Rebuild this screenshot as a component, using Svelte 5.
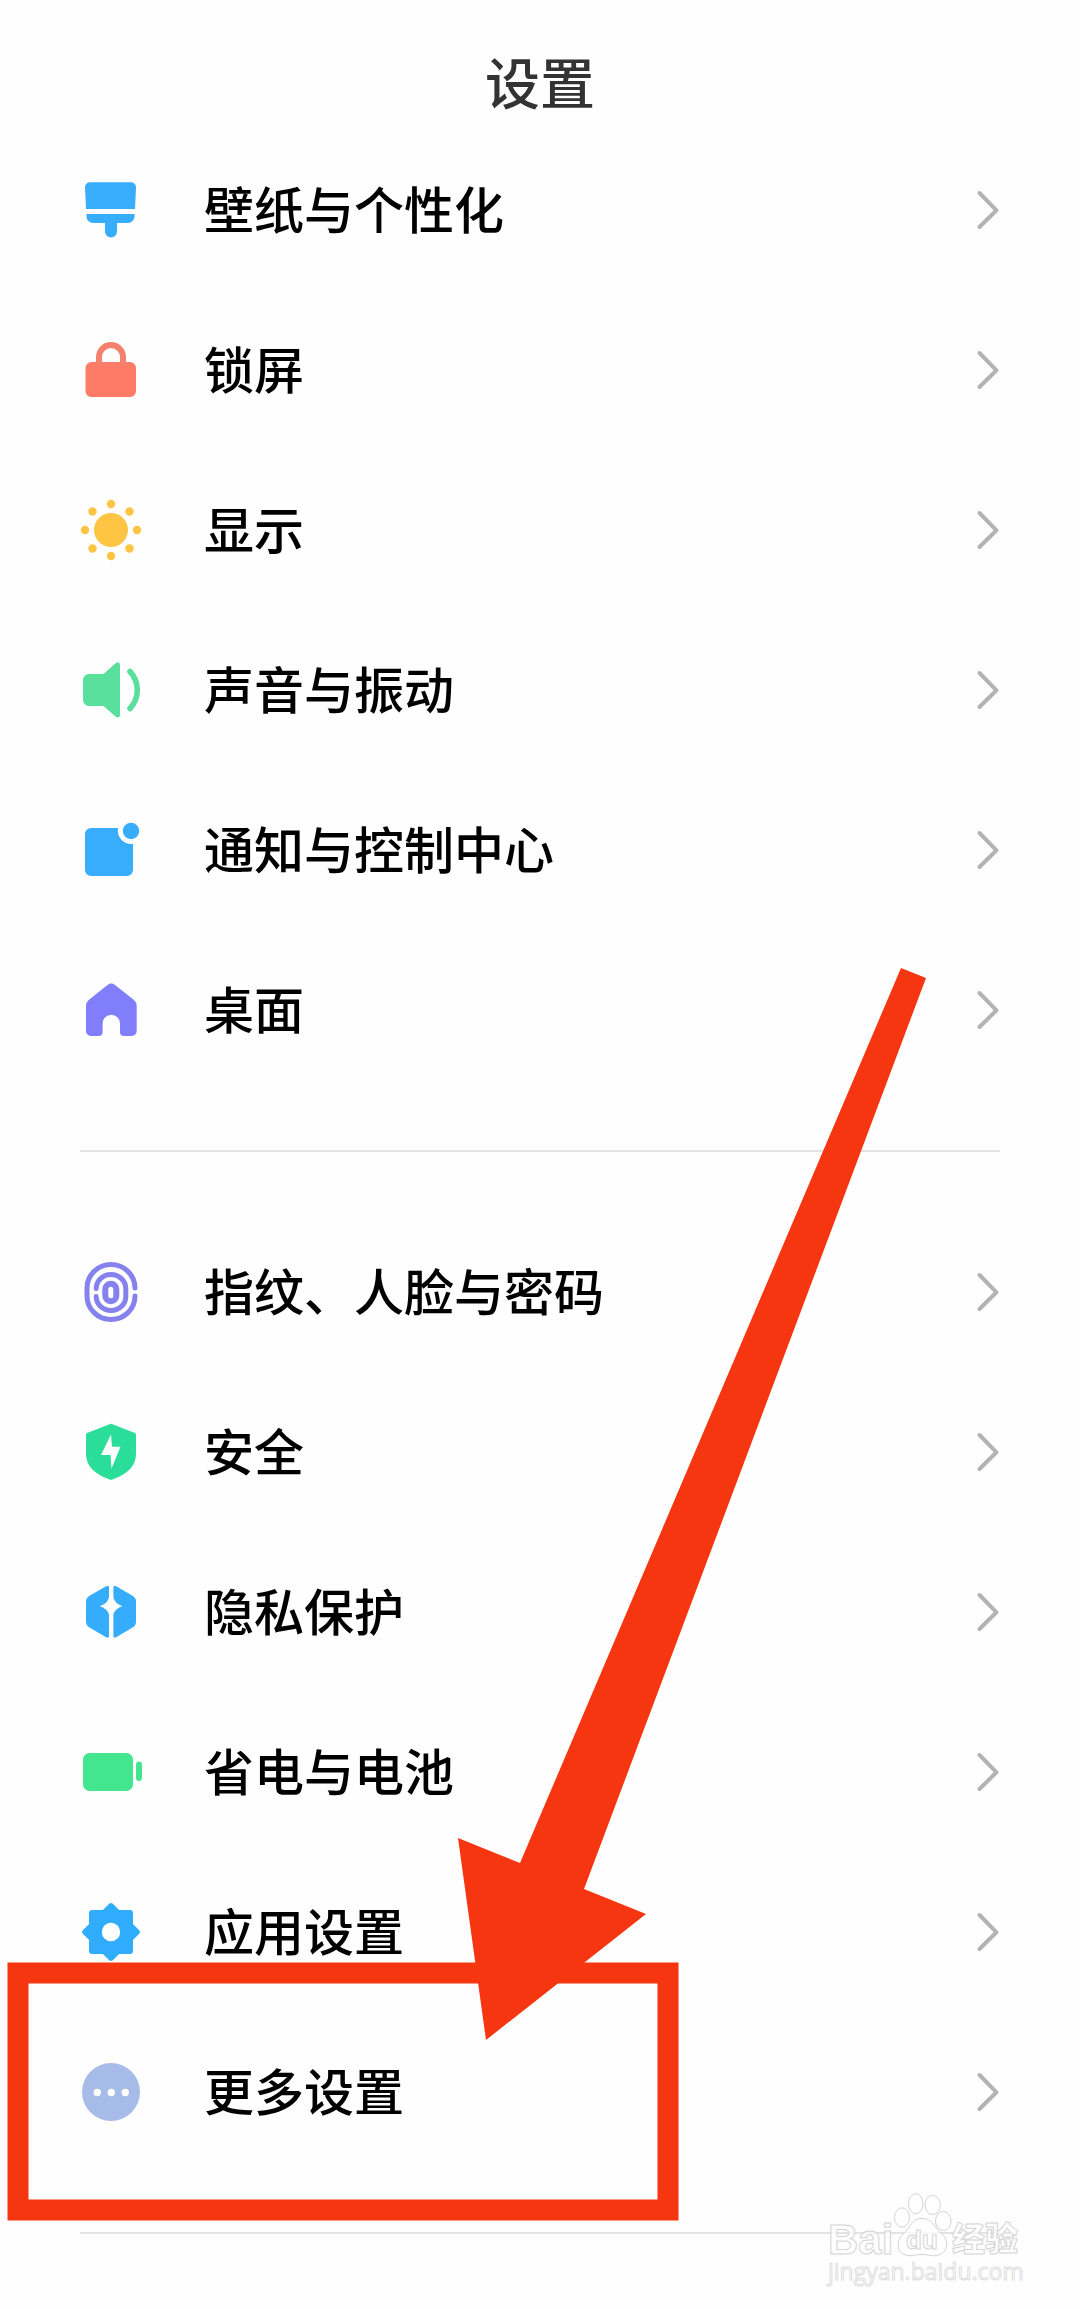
<script>
  const groups = [
    [
      { icon: "brush", label: "壁纸与个性化" },
      { icon: "lock", label: "锁屏" },
      { icon: "sun", label: "显示" },
      { icon: "sound", label: "声音与振动" },
      { icon: "notice", label: "通知与控制中心" },
      { icon: "home", label: "桌面" }
    ],
    [
      { icon: "finger", label: "指纹、人脸与密码" },
      { icon: "shield", label: "安全" },
      { icon: "privacy", label: "隐私保护" },
      { icon: "battery", label: "省电与电池" },
      { icon: "gear", label: "应用设置" },
      { icon: "more", label: "更多设置" }
    ]
  ];

  const rays = [
    [31, 5],
    [49.5, 12.5],
    [57, 31],
    [49.5, 49.5],
    [31, 57],
    [12.5, 49.5],
    [5, 31],
    [12.5, 12.5]
  ];
</script>

<div class="page">
  <header>
    <h1>设置</h1>
  </header>

  <main>
    {#each groups as group}
      <ul class="group">
        {#each group as item}
          <li>
            <button class="row" type="button">
              <svg class="icon" viewBox="0 0 62 62" aria-hidden="true">
                {#if item.icon === "brush"}
                  <g fill="#38adfb">
                    <path d="M10 3.3H51a5 5 0 0 1 5 5L55 30H6L5 8.3a5 5 0 0 1 5-5Z" />
                    <path d="M6.5 35h48v2.5a6.5 6.5 0 0 1-6.5 6.5H37v8.5a6 6 0 0 1-12 0V44H13a6.5 6.5 0 0 1-6.5-6.5Z" />
                  </g>
                {:else if item.icon === "lock"}
                  <rect x="5.5" y="23" width="50.5" height="35" rx="6" fill="#fe7b66" />
                  <path d="M19 25V18a12 12 0 0 1 24 0v7" fill="none" stroke="#f4806e" stroke-width="6" />
                {:else if item.icon === "sun"}
                  <g fill="#fec443">
                    <circle cx="31" cy="31" r="17" />
                    {#each rays as [cx, cy]}
                      <circle {cx} {cy} r="4.2" />
                    {/each}
                  </g>
                {:else if item.icon === "sound"}
                  <path d="M9 15H23.5L35.5 4.2Q40 1.5 40 6V56Q40 60 35.5 57.5L23.5 47H9a6 6 0 0 1-6-6V21a6 6 0 0 1 6-6Z" fill="#5ae09c" />
                  <path d="M50 12.5Q57.3 20.5 57.3 31T50 49.5" fill="none" stroke="#5ae09c" stroke-width="5.6" stroke-linecap="round" />
                {:else if item.icon === "notice"}
                  <g fill="#38adfb">
                    <path d="M11 9H38a13.5 13.5 0 0 0 15 16V51a6 6 0 0 1-6 6H11a6 6 0 0 1-6-6V15a6 6 0 0 1 6-6Z" />
                    <circle cx="51" cy="12" r="8.2" />
                  </g>
                {:else if item.icon === "home"}
                  <path d="M27.5 6Q31.3 3.2 35 6L54 21Q56.7 23.2 56.7 27V52a5 5 0 0 1-5 5H44a4 4 0 0 1-4-4V44.5a8.7 8.7 0 0 0-17.4 0V53a4 4 0 0 1-4 4H11a5 5 0 0 1-5-5V27Q6 23.2 8.7 21Z" fill="#817efb" />
                {:else if item.icon === "finger"}
                  <g fill="none" stroke="#8582ee" stroke-linecap="round" stroke-width="5">
                    <path d="M55 27A24 23.5 0 0 0 7 27V35A24 23.5 0 0 0 55 35" />
                    <path d="M16.2 27.5A14.8 14 0 0 1 45.8 27.5V35.5A14.8 14 0 0 1 16.2 35.5" />
                    <rect x="25.3" y="22.7" width="11" height="17.6" rx="5.5" stroke-width="6" />
                  </g>
                {:else if item.icon === "shield"}
                  <path d="M29.5 3.2Q31 2.5 32.5 3.2L55 12Q56 12.5 56 14V33Q56 50 32.5 58.5Q31 59.2 29.5 58.5Q6 50 6 33V14Q6 12.5 7 12Z" fill="#2ade99" />
                  <path d="M31 13.5L21 34H30.5L31.5 47.5L40.5 25.7H32Z" fill="#fff" />
                {:else if item.icon === "privacy"}
                  <g fill="#35acfc">
                    <path d="M26.2 5.2Q29 3.7 29 6.5V16Q28 22.5 19.7 25Q28 28.5 29 33.5V55Q29 57.5 26.2 56.2L9.5 46.5Q6 44.5 6 40.5V20.5Q6 17 9.5 14.8Z" />
                    <path d="M36.2 5.2Q33.4 3.7 33.4 6.5V16Q34.4 22.5 42.3 25Q34.4 28.5 33.4 33.5V55Q33.4 57.5 36.2 56.2L52.5 46.5Q56 44.5 56 40.5V20.5Q56 17 52.5 14.8Z" />
                  </g>
                {:else if item.icon === "battery"}
                  <g fill="#43e58f">
                    <rect x="3" y="12" width="50" height="38" rx="6.5" />
                    <rect x="56" y="20.5" width="6" height="19.5" rx="3" />
                  </g>
                {:else if item.icon === "gear"}
                  <g fill="#30acfd" stroke="#30acfd" stroke-width="6" stroke-linejoin="round">
                    <rect x="12" y="12" width="38" height="38" />
                    <path d="M31 5.2L56.8 31L31 56.8L5.2 31Z" />
                  </g>
                  <circle cx="31" cy="31" r="9.2" fill="#fff" />
                {:else}
                  <circle cx="31" cy="31" r="29" fill="#a7bbe8" />
                  <g fill="#fff">
                    <circle cx="17.3" cy="31.5" r="3.7" />
                    <circle cx="31.3" cy="31.5" r="3.7" />
                    <circle cx="45.3" cy="31.5" r="3.7" />
                  </g>
                {/if}
              </svg>
              <span class="label">{item.label}</span>
              <svg class="chevron" viewBox="0 0 24 40" aria-hidden="true">
                <path d="M3.5 3L20.5 20.3L3.5 37" />
              </svg>
            </button>
          </li>
        {/each}
      </ul>
      <hr />
    {/each}
  </main>

  <!-- red marker: arrow down to the boxed row -->
  <svg class="marker" viewBox="0 0 940 1270" aria-hidden="true">
    <path d="M901 8L926 18L584 929L646 954L486 1080L458 878L520 903Z" fill="#f63511" />
    <rect x="18" y="1013" width="650" height="237" fill="none" stroke="#f63511" stroke-width="21" />
  </svg>

  <svg class="watermark" viewBox="0 0 200 100">
    <text class="brand" x="3" y="64">Bai</text>
    <g class="paw">
      <ellipse cx="77" cy="27.5" rx="7.5" ry="9.7" />
      <ellipse cx="90.7" cy="13.7" rx="7.3" ry="10" />
      <ellipse cx="107.7" cy="15" rx="7.7" ry="9.6" />
      <ellipse cx="118.3" cy="31" rx="7.8" ry="9.4" />
      <path d="M97 28.3C107 28.3 109 37 116 43C123 49 124 60 116 64C109 67.5 105 64.5 97 64.5C89 64.5 85 67.5 78 64C71 60 72 49 79 43C86 37 87 28.3 97 28.3Z" />
    </g>
    <text class="du" x="81" y="59">du</text>
    <text class="cn" x="127" y="61">经验</text>
    <text class="url" x="3" y="90">jingyan.baidu.com</text>
  </svg>
</div>

<style>
  :global(body) {
    margin: 0;
    background: #fefefe;
  }

  .page {
    position: relative;
    padding-bottom: 15px;
    background: #fefefe;
    font-family: "Noto Sans CJK SC", sans-serif;
    overflow: hidden;
  }

  header {
    padding: 44px 0 14px;
  }

  h1 {
    margin: 0;
    font-size: 55px;
    line-height: 72px;
    font-weight: 500;
    text-align: center;
    color: #333;
  }

  .group {
    margin: 0;
    padding: 0;
    list-style: none;
  }

  .row {
    display: flex;
    align-items: center;
    gap: 62px;
    width: 100%;
    height: 160px;
    padding: 0 80px;
    border: 0;
    background: none;
    font-family: inherit;
    color: #000;
    text-align: left;
    cursor: pointer;
  }

  .icon {
    flex: none;
    width: 62px;
    height: 62px;
  }

  .label {
    flex: 1;
    padding-bottom: 6px;
    font-size: 50px;
    line-height: 72px;
    font-weight: 500;
  }

  .chevron {
    flex: none;
    width: 24px;
    height: 40px;
  }

  .chevron path {
    fill: none;
    stroke: #b3b3b3;
    stroke-width: 4;
    stroke-linecap: round;
    stroke-linejoin: round;
  }

  hr {
    height: 2px;
    margin: 60px 80px;
    border: 0;
    background: #e3e3e3;
  }

  .marker {
    position: absolute;
    top: 960px;
    left: 0;
    width: 940px;
    height: 1270px;
    pointer-events: none;
  }

  .watermark {
    position: absolute;
    right: 55px;
    bottom: 19px;
    width: 200px;
    height: 100px;
    pointer-events: none;
  }

  .watermark text,
  .paw {
    fill: #fff;
    fill-opacity: 0.7;
    stroke: #d4d4d4;
    stroke-width: 1;
  }

  .watermark .brand {
    font: bold 42px "Liberation Sans", sans-serif;
  }

  .watermark .du {
    font: bold 26px "Liberation Sans", sans-serif;
  }

  .watermark .cn {
    font: 900 33px "Noto Sans CJK SC", sans-serif;
  }

  .watermark .url {
    font: 23px "Open Sans", sans-serif;
    stroke: #dedede;
  }
</style>
